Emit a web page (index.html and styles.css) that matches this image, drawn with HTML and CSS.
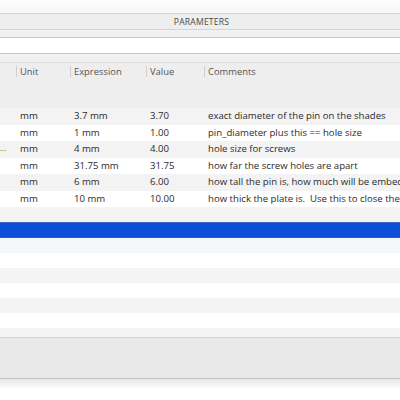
FILE: index.html
```html
<!DOCTYPE html>
<html lang="en">
<head>
    <meta charset="UTF-8">
    <title>Parameters</title>
    <link rel="stylesheet" href="styles.css">
</head>
<body>
    <div class="desk"></div>
    <div class="dialog">
        <div class="titlebar">PARAMETERS</div>
        <div class="strip"></div>
        <div class="search"></div>
        <div class="strip strip-low"></div>

        <div class="table-head">
            <div class="row head-row">
                <div class="cell"></div>
                <div class="cell sep">Unit</div>
                <div class="cell sep">Expression</div>
                <div class="cell sep">Value</div>
                <div class="cell sep">Comments</div>
            </div>
        </div>

        <div class="rows">
            <div class="row data odd">
                <div class="cell"></div>
                <div class="cell">mm</div>
                <div class="cell">3.7 mm</div>
                <div class="cell">3.70</div>
                <div class="cell">exact diameter of the pin on the shades</div>
            </div>
            <div class="row data">
                <div class="cell"></div>
                <div class="cell">mm</div>
                <div class="cell">1 mm</div>
                <div class="cell">1.00</div>
                <div class="cell">pin_diameter plus this == hole size</div>
            </div>
            <div class="row data odd">
                <div class="cell name">...</div>
                <div class="cell">mm</div>
                <div class="cell">4 mm</div>
                <div class="cell">4.00</div>
                <div class="cell">hole size for screws</div>
            </div>
            <div class="row data">
                <div class="cell"></div>
                <div class="cell">mm</div>
                <div class="cell">31.75 mm</div>
                <div class="cell">31.75</div>
                <div class="cell">how far the screw holes are apart</div>
            </div>
            <div class="row data odd">
                <div class="cell"></div>
                <div class="cell">mm</div>
                <div class="cell">6 mm</div>
                <div class="cell">6.00</div>
                <div class="cell">how tall the pin is, how much will be embed</div>
            </div>
            <div class="row data">
                <div class="cell"></div>
                <div class="cell">mm</div>
                <div class="cell">10 mm</div>
                <div class="cell">10.00</div>
                <div class="cell">how thick the plate is.&nbsp; Use this to close the</div>
            </div>

            <div class="blank odd"></div>
            <div class="blank selected"></div>
            <div class="blank after-sel"></div>
            <div class="blank"></div>
            <div class="blank odd"></div>
            <div class="blank"></div>
            <div class="blank odd"></div>
            <div class="blank"></div>
            <div class="blank odd last"></div>
        </div>

        <div class="toolbar"></div>
    </div>
    <div class="shadow"></div>
</body>
</html>
```

FILE: styles.css
```css
html, body {
    margin: 0;
    padding: 0;
    background: #fff;
    overflow: hidden;
}
body {
    width: 400px;
    height: 400px;
    font-family: "Open Sans", "Noto Sans", sans-serif;
    color: #333;
}
.desk {
    height: 13px;
    background: linear-gradient(#fefefe, #f6f6f6);
}
.dialog {
    border-top: 1px solid #d6d6d6;
}
.titlebar {
    height: 15px;
    line-height: 17px;
    background: #eeeeee;
    border-bottom: 1px solid #d4d4d4;
    text-align: center;
    font-size: 8.6px;
    color: #4a4a4a;
    letter-spacing: 0.2px;
    padding-left: 3px;
}
.strip {
    height: 7px;
    background: #f1f1f1;
    border-bottom: 1px solid #c9c9c9;
}
.search {
    height: 15px;
    background: #fff;
    border-bottom: 1px solid #c6c6c6;
}
.strip-low {
    height: 8px;
    border-bottom: 1px solid #dedede;
}
.table-head {
    height: 45px;
    background: #eeeeee;
}
.row {
    display: grid;
    grid-template-columns: 16px 54px 76px 58px 1fr;
    white-space: nowrap;
}
.cell {
    padding-left: 4px;
}
.head-row {
    height: 16px;
    font-size: 9.4px;
    color: #555;
}
.head-row .sep {
    border-left: 1px solid #cfcfcf;
    padding-left: 3px;
    height: 11px;
    margin-top: 3px;
    line-height: 12px;
}
.data {
    height: 16.5px;
    line-height: 16.5px;
    font-size: 9.6px;
    background: #fff;
    color: #2b2b2b;
}
.data .cell:first-child {
    padding-left: 0;
}
.name {
    font-size: 8px;
    color: #666;
    line-height: 14px;
}
.odd {
    background: #f3f3f3;
}
.blank {
    height: 15px;
    background: #fff;
}
.blank.odd {
    background: #f4f4f4;
}
.blank.selected {
    height: 14px;
    background: #0a4fd6;
    border-top: 1px solid #3c6bc6;
    border-bottom: 1px solid #2c5cc0;
}
.blank.after-sel {
    background: #f5f6f8;
}
.blank.last {
    height: 9px;
}
.toolbar {
    height: 40px;
    background: #e9e9e9;
    border-top: 1px solid #d3d3d3;
    border-bottom: 1px solid #c4c4c4;
}
.shadow {
    height: 10px;
    background: linear-gradient(#e6e6e6, #fff);
}
```
